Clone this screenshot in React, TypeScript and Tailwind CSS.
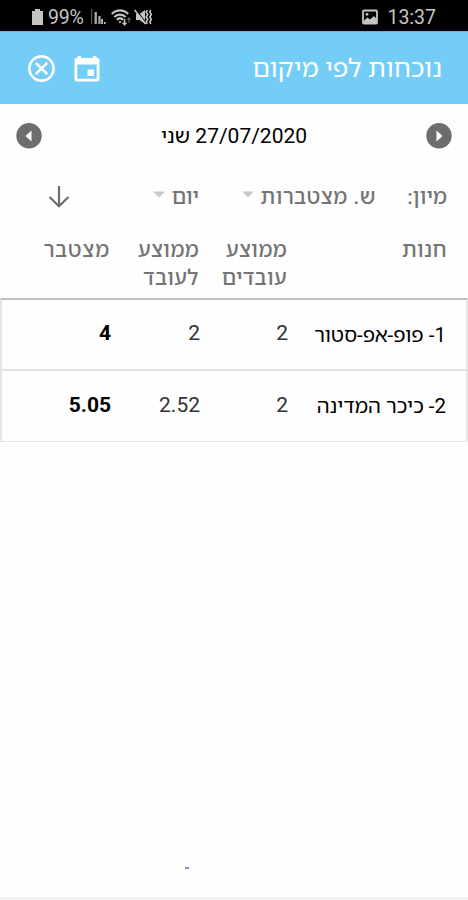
import React from 'react';

interface AttendanceRow {
  id: number;
  store: string;
  avgWorkers: string;
  avgPerWorker: string;
  total: string;
}

const rows: AttendanceRow[] = [
  { id: 1, store: 'פופ-אפ-סטור', avgWorkers: '2', avgPerWorker: '2', total: '4' },
  { id: 2, store: 'כיכר המדינה', avgWorkers: '2', avgPerWorker: '2.52', total: '5.05' },
];

function StatusBar() {
  return (
    <div dir="ltr" className="flex h-[31px] items-center justify-between bg-black pt-[3px] pr-[32px] pl-[32px] text-[#c4c4c4]">
      <div className="flex items-center">
        <svg className="h-[18px] w-[11px]" viewBox="0 0 11 18" fill="currentColor">
          <path d="M3 1h5v2h3v14H0V3h3z" />
        </svg>
        <span className="ml-[5px] w-[43px] pt-px text-[19.5px] leading-none tracking-[-0.2px] whitespace-nowrap">99%</span>
        <svg className="h-[16px] w-[15px]" viewBox="0 0 15 16" fill="currentColor">
          <path d="M0 0h1.2v15H0z" opacity=".45" />
          <path d="M3.5 3h2.4v12H3.5zM7.3 7h2.3v8H7.3z" opacity=".85" />
          <path d="M10.2 10h1.8v5h-1.8zM13 13h1.6v2H13z" />
        </svg>
        <svg className="ml-[5px] h-[17px] w-[20px]" viewBox="0 0 20 17" fill="none" stroke="currentColor">
          <path d="M.8 5C5.5.2 12.5.2 17.2 5" strokeWidth="2.2" />
          <path d="M3.3 8C6.5 4.7 11.5 4.7 14.7 8" strokeWidth="2.2" />
          <path d="M5.8 10.8C7.8 8.9 10.2 8.9 12.2 10.8" strokeWidth="2.2" />
          <path d="M7.2 12.2h3.6L9 14.5z" fill="currentColor" stroke="none" />
          <path d="M13.5 10v6M11.5 13.8l2 2 2-2" strokeWidth="1.5" />
          <path d="M18 14V9M16.5 10.5L18 9l1.5 1.5" strokeWidth="1.2" opacity=".5" />
        </svg>
        <svg className="ml-[3px] h-[17px] w-[19px]" viewBox="0 0 19 17">
          <path d="M2 5h3.5L11 1v14l-5.5-4H2z" fill="currentColor" />
          <path d="M1.5 0l11 14.5" stroke="#000" strokeWidth="1.2" />
          <path d="M.6 1l11 14" stroke="currentColor" strokeWidth="1.6" />
          <path d="M13.2 1l-1 2 1.5 2.5-1.5 2.5 1.5 2.5-1.5 2.5 1 2M16.8 1l-1 2 1.5 2.5-1.5 2.5 1.5 2.5-1.5 2.5 1 2" fill="none" stroke="currentColor" strokeWidth="1.6" />
        </svg>
      </div>
      <div className="flex items-center">
        <svg className="h-[16px] w-[16px]" viewBox="0 0 16 16">
          <rect x="1" y="1.5" width="14" height="13" rx="1" fill="none" stroke="currentColor" strokeWidth="1.8" />
          <path d="M2 11.5l3.5-3 2.5 2L12 7l2.5 3v4H2z" fill="currentColor" />
          <circle cx="5" cy="5.3" r="1.4" fill="currentColor" />
        </svg>
        <span className="ml-[9px] pt-[2px] text-[19.5px] leading-none">13:37</span>
      </div>
    </div>
  );
}

function Header() {
  return (
    <header className="flex h-[73px] items-center justify-between border-t border-[#62b5dc] bg-[#73cdf7] pr-[26px] pl-[28px] text-white">
      <h1 className="text-[26px] leading-none">נוכחות לפי מיקום</h1>
      <div className="flex items-center gap-[19px]">
        <svg className="mt-[2px] h-[26px] w-[26px]" viewBox="0 0 26 26" fill="currentColor">
          <path
            fillRule="evenodd"
            d="M3.5 0H7v2h12V0h3.5v2h.5a2.5 2.5 0 0 1 2.5 2.5V23a2.5 2.5 0 0 1-2.5 2.5H3A2.5 2.5 0 0 1 .5 23V4.5A2.5 2.5 0 0 1 3 2h.5zM3.3 8.5v14.2h19.4V8.5z"
          />
          <path d="M13.5 13.5H20V20h-6.5z" />
        </svg>
        <svg className="h-[27px] w-[27px]" viewBox="0 0 27 27" fill="none" stroke="currentColor" strokeWidth="2.6">
          <circle cx="13.5" cy="13.5" r="12.1" />
          <path d="M7.8 7.8l11.4 11.4M19.2 7.8L7.8 19.2" />
        </svg>
      </div>
    </header>
  );
}

function DayButton({ direction }: { direction: 'left' | 'right' }) {
  return (
    <button className="h-[26px] w-[26px]">
      <svg viewBox="0 0 26 26">
        <circle cx="13" cy="12.8" r="12.7" fill="#6d6d6d" />
        <path d={direction === 'right' ? 'M10.5 7.5v11l6-5.5z' : 'M15.5 7.5v11l-6-5.5z'} fill="#fff" />
      </svg>
    </button>
  );
}

function Caret() {
  return (
    <svg className="mb-[6px] h-[7px] w-[12px]" viewBox="0 0 12 7">
      <path d="M0 .5h12L6 6.5z" fill="#c9c9c9" />
    </svg>
  );
}

export default function App() {
  return (
    <div
      dir="rtl"
      className="flex h-[900px] w-[468px] flex-col overflow-hidden bg-[#fefefe] font-[Roboto,'Noto_Sans_Hebrew','Open_Sans',sans-serif]"
    >
      <StatusBar />
      <Header />

      {/* Day navigation */}
      <div className="flex h-[63px] items-center justify-between pr-[16px] pl-[16px] text-black">
        <DayButton direction="right" />
        <span className="pt-px text-[21px] leading-none">27/07/2020 שני</span>
        <DayButton direction="left" />
      </div>

      {/* Sorting */}
      <div className="flex h-[59px] items-center pt-px pr-[21px] text-[21px] leading-none font-medium text-[#757575]">
        <span className="w-[71px]">מיון:</span>
        <button className="flex w-[177px] items-center gap-[7px]">
          <span className="tracking-[0.5px]">ש. מצטברות</span>
          <Caret />
        </button>
        <button className="flex w-[129px] items-center gap-[7px]">
          <span>יום</span>
          <Caret />
        </button>
        <svg className="h-[22px] w-[22px]" viewBox="0 0 22 22" fill="none" stroke="#6d6d6d" strokeWidth="2.2">
          <path d="M11 0v20M1.5 11l9.500 9.300L20.500 11" />
        </svg>
      </div>

      <div className="grid h-[72px] grid-cols-[160px_88px_89px_1fr] pt-[10px] pr-[21px] text-[21px] leading-[28px] font-medium tracking-[0.4px] text-[#757575]">
        <span>חנות</span>
        <span>ממוצע<br />עובדים</span>
        <span>ממוצע<br />לעובד</span>
        <span className="tracking-[0.8px]">מצטבר</span>
      </div>

      <div className="border-x-2 border-t-2 border-x-[#e6e6e6] border-t-[#c0c0c0]">
        {rows.map((row) => (
          <div
            key={row.id}
            className="grid h-[71px] grid-cols-[158px_88px_89px_1fr] items-center border-b-2 border-[#e4e4e4] pr-[20px] pb-[2px] text-[21px] leading-none text-[#333] last:border-b"
          >
            <span className="pt-[3px] text-[20.5px] whitespace-nowrap text-black">{row.id}- {row.store}</span>
            <span>{row.avgWorkers}</span>
            <span>{row.avgPerWorker}</span>
            <span className="font-bold text-black">{row.total}</span>
          </div>
        ))}
      </div>

      <div className="flex-1 pt-[425px] pr-[279px]">
        <div className="h-[2px] w-[4px] bg-[#8f8bc4]" />
      </div>
      <footer className="h-[3px] bg-[#f3f3f3]" />
    </div>
  );
}
